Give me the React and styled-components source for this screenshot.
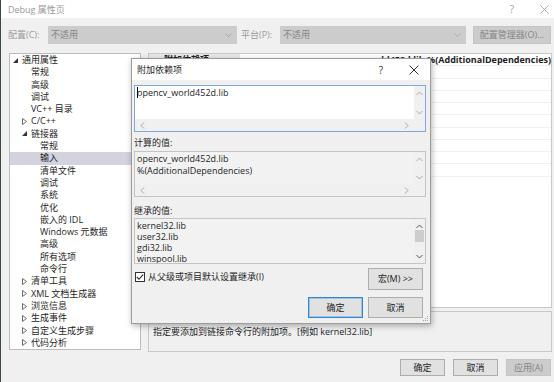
import React from "react";
import styled, { createGlobalStyle } from "styled-components";

const Global = createGlobalStyle`
  html, body { margin: 0; padding: 0; background: #f0f0f0; }
  body {
    width: 554px; height: 382px; overflow: hidden;
    font-family: "Open Sans", "Noto Sans CJK SC", sans-serif;
    font-size: 9px; color: #1e1e1e;
  }
  * { box-sizing: border-box; }
`;

const Window = styled.div`
  position: relative;
  width: 554px;
  height: 382px;
  display: flex;
  flex-direction: column;
  background: #f0f0f0;
  border-left: 1px solid #3a4848;
`;

const TitleBar = styled.div`
  height: 18px;
  background: #ffffff;
  display: flex;
  align-items: center;
  padding: 0 5px 0 7px;
  color: #999999;
  line-height: 12px;
`;

const TitleText = styled.span`
  flex: 1;
  padding-top: 1px;
`;

const Help = styled.span`
  font-size: 10px;
  color: ${(p) => p.$color};
  width: 8px;
  text-align: center;
`;

const CloseBox = styled.span`
  display: flex;
  margin-left: ${(p) => p.$gap}px;
`;

const ConfigRow = styled.div`
  margin-top: 8px;
  height: 18px;
  display: flex;
  align-items: center;
  padding-left: 7px;
`;

const FieldLabel = styled.span`
  width: ${(p) => p.$w}px;
  margin-left: ${(p) => p.$ml || 0}px;
  color: #9a9a9a;
  line-height: 12px;
`;

const Combo = styled.div`
  width: ${(p) => p.$w}px;
  height: 18px;
  background: #cccccc;
  color: #858585;
  display: flex;
  align-items: center;
  justify-content: space-between;
  padding: 0 5px 0 3px;
  line-height: 12px;
`;

const FlatButton = styled.div`
  width: ${(p) => p.$w}px;
  height: ${(p) => p.$h || 17}px;
  margin-left: ${(p) => p.$ml || 0}px;
  margin-right: ${(p) => p.$mr || 0}px;
  display: flex;
  align-items: center;
  justify-content: center;
  line-height: 12px;
  background: ${(p) => (p.$disabled ? "#cccccc" : "#e1e1e1")};
  border: 1px solid ${(p) => (p.$disabled ? "#c4c4c4" : p.$default ? "#2f86d9" : "#adadad")};
  box-shadow: ${(p) => (p.$default ? "inset 0 0 0 1px rgba(47,134,217,0.35)" : "none")};
  color: ${(p) => (p.$disabled ? "#858585" : "#1e1e1e")};
  flex-shrink: 0;
`;

const Main = styled.div`
  margin-top: 9px;
  display: flex;
  gap: 7px;
  padding-left: 8px;
  height: 299px;
`;

const Tree = styled.div`
  width: 132px;
  height: 297px;
  background: #ffffff;
  border: 1px solid #bcbcbc;
  display: flex;
  flex-direction: column;
  overflow: hidden;
`;

const TreeRow = styled.div`
  height: 12.3px;
  line-height: 12.3px;
  display: flex;
  align-items: center;
  padding-left: ${(p) => 3 + p.$level * 9}px;
  background: ${(p) => (p.$selected ? "#d3d3df" : "transparent")};
  color: #1e1e1e;
  white-space: nowrap;
  flex-shrink: 0;
`;

const Arrow = styled.span`
  width: 9px;
  height: 9px;
  display: flex;
  align-items: center;
  justify-content: flex-start;
  flex-shrink: 0;
`;

const RightCol = styled.div`
  width: 404px;
  display: flex;
  flex-direction: column;
  gap: 3px;
`;

const Grid = styled.div`
  height: 255px;
  background: #ffffff;
  border: 1px solid #c8c8c8;
  display: flex;
  flex-direction: column;
  overflow: hidden;
`;

const GridRow = styled.div`
  height: 12.25px;
  display: flex;
  align-items: center;
  border-bottom: 1px solid #f0f0f0;
  font-weight: ${(p) => (p.$bold ? 700 : 400)};
  line-height: 11px;
  white-space: nowrap;
  flex-shrink: 0;
`;

const GridName = styled.span`
  width: 150px;
  padding-left: 15px;
  align-self: stretch;
  display: flex;
  align-items: center;
  background: ${(p) => (p.$selected ? "#e8e8e8" : "transparent")};
`;

const GridValue = styled.span`
  padding-left: 88px;
`;

const Desc = styled.div`
  flex: 1;
  border: 1px solid #c8c8c8;
  background: #f0f0f0;
  padding: 14px 0 0 4px;
  line-height: 12px;
`;

const Footer = styled.div`
  margin-top: 7px;
  display: flex;
  justify-content: flex-end;
  gap: 8px;
  padding-right: 3px;
`;

/* dialog */
const Dialog = styled.div`
  position: absolute;
  left: 130px;
  top: 58px;
  width: 300px;
  height: 266px;
  background: #f0f0f0;
  border: 1px solid #9c9c9c;
  box-shadow: 1px 2px 6px rgba(0, 0, 0, 0.3);
  display: flex;
  flex-direction: column;
`;

const DialogTitle = styled.div`
  height: 21px;
  background: #ffffff;
  display: flex;
  align-items: center;
  padding: 0 11px 0 5px;
  color: #1e1e1e;
  line-height: 12px;
`;

const DialogBody = styled.div`
  display: flex;
  flex-direction: column;
  padding: 0 4px 0 2px;
`;

const TextBox = styled.div`
  margin-top: ${(p) => p.$mt}px;
  height: ${(p) => p.$h}px;
  border: 1px solid ${(p) => p.$border};
  background: ${(p) => p.$bg};
  display: grid;
  grid-template-columns: 1fr 11px;
  grid-template-rows: ${(p) => (p.$hscroll ? "1fr 12px" : "1fr")};
  overflow: hidden;
`;

const BoxContent = styled.div`
  padding: ${(p) => p.$pt}px 0 0 2px;
  line-height: ${(p) => p.$lh}px;
  white-space: nowrap;
  overflow: hidden;
  color: #1e1e1e;
`;

const VScroll = styled.div`
  background: #f0f0f0;
  display: flex;
  flex-direction: column;
  align-items: center;
  justify-content: space-between;
  padding: ${(p) => p.$pad};
`;

const Thumb = styled.div`
  width: 9px;
  height: 12px;
  background: #cdcdcd;
  margin-top: 1px;
  margin-bottom: auto;
`;

const HScroll = styled.div`
  background: #f0f0f0;
  display: flex;
  align-items: center;
  justify-content: space-between;
  padding: 0 5px;
`;

const Corner = styled.div`
  background: #f0f0f0;
`;

const Caret = styled.span`
  display: inline-block;
  width: 1px;
  height: 11px;
  background: #000000;
  vertical-align: -2px;
  margin-right: -1px;
`;

const SectionLabel = styled.div`
  margin-top: ${(p) => p.$mt}px;
  line-height: 12px;
  color: #1e1e1e;
`;

const CheckRow = styled.div`
  margin-top: 4px;
  height: 22px;
  display: flex;
  align-items: flex-start;
`;

const CheckBox = styled.span`
  margin-top: 4px;
  margin-left: 1px;
  width: 10px;
  height: 10px;
  border: 1px solid #333333;
  background: #ffffff;
  display: flex;
  align-items: center;
  justify-content: center;
`;

const CheckLabel = styled.span`
  margin-left: 3px;
  margin-top: 3px;
  line-height: 12px;
  flex: 1;
`;

const ButtonRow = styled.div`
  margin-top: 7px;
  display: flex;
  justify-content: flex-end;
  gap: 5px;
  margin-right: 3px;
`;

const Grip = styled.span`
  position: absolute;
  right: 1px;
  bottom: 1px;
  display: flex;
`;

const Chevron = ({ dir, color }) => {
  const pts = {
    up: "0.5,4 3.5,1 6.5,4",
    down: "0.5,1 3.5,4 6.5,1",
    left: "4,0.5 1,3.5 4,6.5",
    right: "1,0.5 4,3.5 1,6.5",
  }[dir];
  const horiz = dir === "left" || dir === "right";
  return (
    <svg width={horiz ? 5 : 7} height={horiz ? 7 : 5} viewBox={horiz ? "0 0 5 7" : "0 0 7 5"}>
      <polyline points={pts} fill="none" stroke={color} strokeWidth="1" />
    </svg>
  );
};

const XIcon = ({ size, color }) => (
  <svg width={size} height={size} viewBox="0 0 10 10">
    <path d="M0.5 0.5 L9.5 9.5 M9.5 0.5 L0.5 9.5" stroke={color} strokeWidth="1" fill="none" />
  </svg>
);

const TreeArrow = ({ kind }) =>
  kind === "open" ? (
    <svg width="5" height="5" viewBox="0 0 5 5">
      <polygon points="5,0 5,5 0,5" fill="#333333" />
    </svg>
  ) : (
    <svg width="5" height="7" viewBox="0 0 5 7">
      <polygon points="0.5,0.5 4.5,3.5 0.5,6.5" fill="none" stroke="#6e6e6e" strokeWidth="1" />
    </svg>
  );

const treeItems = [
  { t: "通用属性", l: 0, a: "open" },
  { t: "常规", l: 1 },
  { t: "高级", l: 1 },
  { t: "调试", l: 1 },
  { t: "VC++ 目录", l: 1 },
  { t: "C/C++", l: 1, a: "closed" },
  { t: "链接器", l: 1, a: "open" },
  { t: "常规", l: 2 },
  { t: "输入", l: 2, sel: true },
  { t: "清单文件", l: 2 },
  { t: "调试", l: 2 },
  { t: "系统", l: 2 },
  { t: "优化", l: 2 },
  { t: "嵌入的 IDL", l: 2 },
  { t: "Windows 元数据", l: 2 },
  { t: "高级", l: 2 },
  { t: "所有选项", l: 2 },
  { t: "命令行", l: 2 },
  { t: "清单工具", l: 1, a: "closed" },
  { t: "XML 文档生成器", l: 1, a: "closed" },
  { t: "浏览信息", l: 1, a: "closed" },
  { t: "生成事件", l: 1, a: "closed" },
  { t: "自定义生成步骤", l: 1, a: "closed" },
  { t: "代码分析", l: 1, a: "closed" },
];

const DropChevron = () => (
  <svg width="7" height="4" viewBox="0 0 7 4">
    <polyline points="0.5,0.5 3.5,3.5 6.5,0.5" fill="none" stroke="#a8a8a8" strokeWidth="1" />
  </svg>
);

export default function App() {
  const light = "#a6a6a6";
  return (
    <>
      <Global />
      <Window>
        <TitleBar>
          <TitleText>Debug 属性页</TitleText>
          <Help $color="#a0a0a0">?</Help>
          <CloseBox $gap={24}>
            <XIcon size={9} color="#a0a0a0" />
          </CloseBox>
        </TitleBar>

        <ConfigRow>
          <FieldLabel $w={40}>配置(C):</FieldLabel>
          <Combo $w={189}>
            <span>不适用</span>
            <DropChevron />
          </Combo>
          <FieldLabel $w={39} $ml={4}>平台(P):</FieldLabel>
          <Combo $w={186}>
            <span>不适用</span>
            <DropChevron />
          </Combo>
          <FlatButton $w={78} $h={18} $ml={7} $disabled>
            配置管理器(O)...
          </FlatButton>
        </ConfigRow>

        <Main>
          <Tree>
            {treeItems.map((it, i) => (
              <TreeRow key={i} $level={it.l} $selected={it.sel}>
                <Arrow>{it.a ? <TreeArrow kind={it.a} /> : null}</Arrow>
                <span>{it.t}</span>
              </TreeRow>
            ))}
          </Tree>
          <RightCol>
            <Grid>
              <GridRow $bold>
                <GridName $selected>附加依赖项</GridName>
                <GridValue>opencv_world452d.lib;%(AdditionalDependencies)</GridValue>
              </GridRow>
              {Array.from({ length: 9 }).map((_, i) => (
                <GridRow key={i} />
              ))}
            </Grid>
            <Desc>指定要添加到链接命令行的附加项。[例如 kernel32.lib]</Desc>
          </RightCol>
        </Main>

        <Footer>
          <FlatButton $w={45}>确定</FlatButton>
          <FlatButton $w={45}>取消</FlatButton>
          <FlatButton $w={45} $disabled>应用(A)</FlatButton>
        </Footer>

        <Dialog>
          <DialogTitle>
            <TitleText>附加依赖项</TitleText>
            <Help $color="#333333">?</Help>
            <CloseBox $gap={24}>
              <XIcon size={10} color="#333333" />
            </CloseBox>
          </DialogTitle>
          <DialogBody>
            <TextBox $mt={5} $h={47} $border="#7ea9dc" $bg="#ffffff" $hscroll>
              <BoxContent $pt={1} $lh={12}>
                <Caret />
                opencv_world452d.lib
              </BoxContent>
              <VScroll $pad="5px 0 4px">
                <Chevron dir="up" color={light} />
                <Chevron dir="down" color={light} />
              </VScroll>
              <HScroll>
                <Chevron dir="left" color={light} />
                <Chevron dir="right" color={light} />
              </HScroll>
              <Corner />
            </TextBox>

            <SectionLabel $mt={5}>计算的值:</SectionLabel>
            <TextBox $mt={2} $h={46} $border="#c4c4c4" $bg="#f2f2f2" $hscroll>
              <BoxContent $pt={1} $lh={11.5}>
                opencv_world452d.lib
                <br />
                %(AdditionalDependencies)
              </BoxContent>
              <VScroll $pad="5px 0 4px">
                <Chevron dir="up" color={light} />
                <Chevron dir="down" color={light} />
              </VScroll>
              <HScroll>
                <Chevron dir="left" color={light} />
                <Chevron dir="right" color={light} />
              </HScroll>
              <Corner />
            </TextBox>

            <SectionLabel $mt={8}>继承的值:</SectionLabel>
            <TextBox $mt={1} $h={46} $border="#c4c4c4" $bg="#f2f2f2">
              <BoxContent $pt={1} $lh={11}>
                kernel32.lib
                <br />
                user32.lib
                <br />
                gdi32.lib
                <br />
                winspool.lib
              </BoxContent>
              <VScroll $pad="5px 0 4px">
                <Chevron dir="up" color="#555555" />
                <Thumb />
                <Chevron dir="down" color="#555555" />
              </VScroll>
            </TextBox>

            <CheckRow>
              <CheckBox>
                <svg width="8" height="8" viewBox="0 0 8 8">
                  <polyline points="0.8,4 3,6.3 7.2,1.5" fill="none" stroke="#222222" strokeWidth="1.1" />
                </svg>
              </CheckBox>
              <CheckLabel>从父级或项目默认设置继承(I)</CheckLabel>
              <FlatButton $w={55} $h={22} $mr={3}>
                宏(M) &gt;&gt;
              </FlatButton>
            </CheckRow>

            <ButtonRow>
              <FlatButton $w={55} $h={21} $default>确定</FlatButton>
              <FlatButton $w={55} $h={21}>取消</FlatButton>
            </ButtonRow>
          </DialogBody>
          <Grip>
            <svg width="6" height="6" viewBox="0 0 6 6">
              <rect x="4" y="0" width="1" height="1" fill="#a0a0a0" />
              <rect x="2" y="2" width="1" height="1" fill="#a0a0a0" />
              <rect x="4" y="2" width="1" height="1" fill="#a0a0a0" />
              <rect x="0" y="4" width="1" height="1" fill="#a0a0a0" />
              <rect x="2" y="4" width="1" height="1" fill="#a0a0a0" />
              <rect x="4" y="4" width="1" height="1" fill="#a0a0a0" />
            </svg>
          </Grip>
        </Dialog>
      </Window>
    </>
  );
}
